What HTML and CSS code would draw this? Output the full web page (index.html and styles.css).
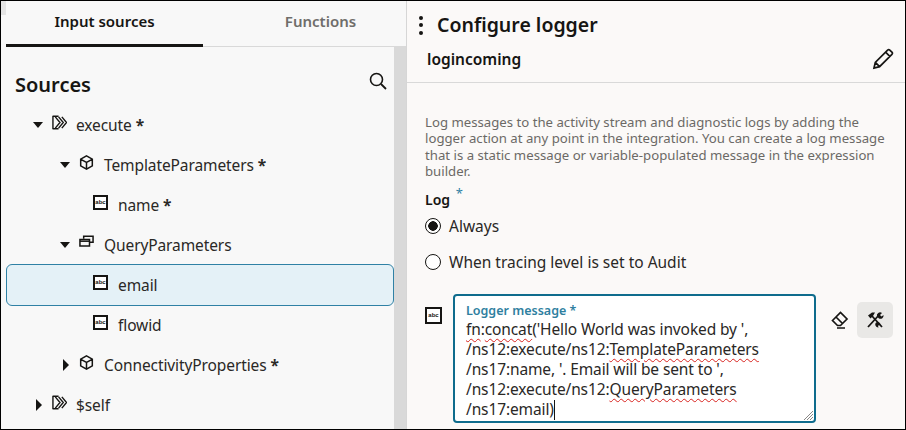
FILE: index.html
```html
<!DOCTYPE html>
<html lang="en">
<head>
<meta charset="utf-8">
<title>Configure logger</title>
<link rel="stylesheet" href="styles.css">
</head>
<body>
<svg class="sprite" width="0" height="0" aria-hidden="true">
  <symbol id="i-exec" viewBox="0 0 16 16">
    <path d="M1 1.3h6M1 14.7h6M1 .7v14.6" fill="none" stroke="#161513" stroke-width="1.5"/>
    <path d="M3.5 2l5 6-5 6M7 2l5 6-5 6M10.5 2l5 6-5 6" fill="none" stroke="#161513" stroke-width="1.5"/>
  </symbol>
  <symbol id="i-cube" viewBox="0 0 16 16">
    <path d="M8 1l6.2 3.5v7L8 15l-6.2-3.5v-7zM2 4.6L8 8l6-3.4M8 8v6.8" fill="none" stroke="#161513" stroke-width="1.6"/>
  </symbol>
  <symbol id="i-coll" viewBox="0 0 16 16">
    <path d="M5 4V1.2h10v6.6h-3.5" fill="none" stroke="#161513" stroke-width="1.6"/>
    <path d="M1 4.8h10.2v6.8H1z" fill="none" stroke="#161513" stroke-width="1.6"/>
    <path d="M1 6.6h10" stroke="#161513" stroke-width="1.6"/>
  </symbol>
</svg>
<div class="frame">
  <aside class="left">
    <nav class="tabs">
      <div class="tab active">Input sources</div>
      <div class="tab later">Functions</div>
    </nav>
    <div class="left-body">
      <div class="tree-pane">
        <div class="sources-head">
          <h2 class="sources-title">Sources</h2>
          <svg class="search" viewBox="0 0 18 18" width="18" height="18"><circle cx="7.5" cy="7.5" r="6" fill="none" stroke="#161513" stroke-width="1.6"/><path d="M12 12l5 5" stroke="#161513" stroke-width="1.8"/></svg>
        </div>
        <ul class="tree">
          <li class="row lv1"><span class="caret down"></span><svg class="ico"><use href="#i-exec"/></svg><span class="label">execute <b class="req">*</b></span></li>
          <li class="row lv2"><span class="caret down"></span><svg class="ico"><use href="#i-cube"/></svg><span class="label">TemplateParameters <b class="req">*</b></span></li>
          <li class="row lv3"><span class="ico abc">abc</span><span class="label">name <b class="req">*</b></span></li>
          <li class="row lv2"><span class="caret down"></span><svg class="ico"><use href="#i-coll"/></svg><span class="label">QueryParameters</span></li>
          <li class="row lv3 selected"><span class="ico abc">abc</span><span class="label">email</span></li>
          <li class="row lv3"><span class="ico abc">abc</span><span class="label">flowid</span></li>
          <li class="row lv2"><span class="caret right"></span><svg class="ico"><use href="#i-cube"/></svg><span class="label">ConnectivityProperties <b class="req">*</b></span></li>
          <li class="row lv1"><span class="caret right"></span><svg class="ico"><use href="#i-exec"/></svg><span class="label">$self</span></li>
        </ul>
      </div>
      <div class="scrollbar"></div>
    </div>
  </aside>
  <main class="right">
    <header class="head">
      <div class="head-top">
        <span class="kebab"><i></i><i></i><i></i></span>
        <h1 class="title">Configure logger</h1>
      </div>
      <div class="head-sub">
        <span class="name">logincoming</span>
        <svg class="pencil" viewBox="0 0 22 22" width="22" height="22"><path d="M2 20l1.3-5.6L15.6 2.1a1.6 1.6 0 0 1 2.2 0l2.1 2.1a1.6 1.6 0 0 1 0 2.2L7.6 18.7zM3.3 14.4l4.3 4.3M13.6 4.2l4.2 4.2" fill="none" stroke="#161513" stroke-width="1.7"/></svg>
      </div>
    </header>
    <section class="content">
      <p class="desc">Log messages to the activity stream and diagnostic logs by adding the logger action at any point in the integration. You can create a log message that is a static message or variable-populated message in the expression builder.</p>
      <div class="log-label">Log <span class="log-req">*</span></div>
      <div class="radio-row"><span class="radio on"></span><span>Always</span></div>
      <div class="radio-row"><span class="radio"></span><span>When tracing level is set to Audit</span></div>
      <div class="field">
        <span class="field-ico abc">abc</span>
        <div class="msgbox">
          <div class="msg-label">Logger message *</div>
          <div class="msg-text"><span class="sq">fn</span>:<span class="sq">concat</span>('Hello World was invoked by ',<br>/ns12:execute/ns12:<span class="sq">TemplateParameters</span><br>/ns17:name, '. Email will be sent to ',<br>/ns12:execute/ns12:<span class="sq">QueryParameters</span><br>/ns17:email)<span class="cursor"></span></div>
          <svg class="grip" viewBox="0 0 11 11" width="11" height="11"><path d="M1 10L10 1M4 10l6-6M7 10l3-3" stroke="#8a8886" stroke-width="1"/></svg>
        </div>
        <div class="tools">
          <svg class="erase" viewBox="0 0 18 18" width="18" height="18"><path d="M1.5 9.5L9.5 1.5l6.5 6.5-6.5 6.5H6.5zM5 6l6.5 6.5M6 17h8" fill="none" stroke="#161513" stroke-width="1.7"/></svg>
          <span class="tool-btn"><svg viewBox="0 0 18 18" width="18" height="18"><path d="M2 16L13 4M16 16L6 5" stroke="#161513" stroke-width="1.8" fill="none"/><path d="M2 4.5L6 1.5h3L7 5 4.5 7.5zM11 5.5a3.2 3.2 0 0 1 5-3.5l-2 2 1.5 1.5 2-1.5a3.2 3.2 0 0 1-4.5 3.5zM10 11.5a3 3 0 0 1 4.5 3l-1.5-.5-1 1 .5 1.5a3 3 0 0 1-2.5-5z" fill="#161513"/></svg></span>
        </div>
      </div>
    </section>
  </main>
</div>
</body>
</html>
```
FILE: styles.css
```css
* { box-sizing: border-box; }
html, body { margin: 0; padding: 0; }
body { width: 906px; height: 430px; overflow: hidden; font-family: "Noto Sans", sans-serif; color: #161513; }
.sprite { position: absolute; }
.frame { width: 906px; height: 430px; border: 1px solid #000; display: grid; grid-template-columns: 406px 1fr; background: #f8f8f8; overflow: hidden; }

.left { padding-left: 5px; display: flex; flex-direction: column; border-right: 1px solid #d6d6d6; min-height: 0; background: linear-gradient(#e4e4e4, #e4e4e4) no-repeat 0 0 / 5px 14px; }
.tabs { display: grid; grid-template-columns: 197px 1fr; height: 46px; border-bottom: 1px solid #d9d9d9; flex: none; }
.tab { font-size: 15px; font-weight: 600; color: #6f6d6a; text-align: center; line-height: 41px; }
.tab.later { padding-left: 32px; }
.tab.active { color: #161513; border-bottom: 3px solid #161513; height: 46px; }
.left-body { display: flex; flex: 1; min-height: 0; }
.tree-pane { flex: 1; min-width: 0; }
.scrollbar { width: 12px; background: #d9d9d9; flex: none; }
.sources-head { height: 58px; display: flex; justify-content: space-between; align-items: flex-start; padding: 24px 7px 0 9px; }
.sources-title { margin: 0; font-size: 20px; font-weight: 600; line-height: 28px; }
.search { margin-top: 1px; }
.tree { list-style: none; margin: 0; padding: 0; }
.row { height: 40px; display: flex; align-items: center; font-size: 15.5px; letter-spacing: -0.1px; color: #2a2826; }
.row.selected { height: 42px; margin: -1px 0; background: #e4f1f7; border: 1px solid #2f81a5; border-radius: 6px; }
.lv1 { padding-left: 27px; }
.lv2 { padding-left: 54px; }
.lv3 { padding-left: 87px; }
.selected.lv3 { padding-left: 86px; }
.ico { width: 15px; height: 15px; margin-bottom: 6px; margin-right: 9px; flex: none; }
.lv2 .ico { margin-right: 10px; }
.lv3 .ico { margin-right: 10px; }
.abc { display: flex; align-items: center; justify-content: center; background: #fff; border: 2px solid #161513; font-family: "Liberation Sans", sans-serif; font-weight: 700; font-size: 6px; letter-spacing: 0; color: #161513; line-height: 1; }
.req { font-weight: 700; }
.caret { width: 19px; flex: none; height: 10px; position: relative; margin-bottom: 1px; }
.caret::before { content: ""; position: absolute; width: 0; height: 0; border-style: solid; }
.caret.down::before { left: 0; top: 2px; border-width: 6px 5.5px 0; border-color: #161513 transparent transparent; }
.caret.right::before { left: 3px; top: -1px; border-width: 6px 0 6px 6px; border-color: transparent transparent transparent #161513; }

.right { background: #fbf9f8; min-width: 0; }
.head { height: 82px; border-bottom: 1px solid #d9d9d9; padding-left: 20px; padding-right: 11px; }
.head-top { display: flex; align-items: center; height: 46px; padding-top: 2px; }
.kebab { display: flex; flex-direction: column; gap: 3.5px; width: 4px; margin-left: -8px; margin-right: 14px; }
.kebab i { width: 4px; height: 4px; border-radius: 50%; background: #161513; display: block; }
.title { margin: 0; font-size: 19.5px; font-weight: 600; line-height: 28px; }
.head-sub { display: flex; justify-content: space-between; align-items: center; height: 24px; }
.name { font-size: 15.5px; font-weight: 600; }
.pencil { display: block; }
.content { padding: 31px 20px 0 18px; }
.desc { margin: 0; font-size: 13.2px; line-height: 16.4px; color: #6b6966; }
.log-label { font-size: 14px; font-weight: 600; margin-top: 11px; line-height: 17px; height: 17px; }
.log-req { color: #2f81a5; font-weight: 400; font-size: 13px; vertical-align: 7px; margin-left: 2px; line-height: 0; }
.radio-row { display: flex; align-items: center; gap: 8px; font-size: 15.5px; height: 36px; color: #2a2826; }
.radio { width: 16px; height: 16px; border: 1.5px solid #161513; border-radius: 50%; background: #fff; flex: none; }
.radio.on { background: radial-gradient(circle, #161513 0 4.5px, #fff 5px); }
.field { display: flex; align-items: flex-start; margin-top: 14px; margin-right: -7px; }
.field-ico { width: 17px; height: 17px; margin-top: 13px; margin-right: 11px; flex: none; }
.msgbox { position: relative; width: 363px; height: 129px; border: 2px solid #0f6c8d; border-radius: 4px; background: #fff; padding: 7px 11px 0 11px; flex: none; }
.msg-label { font-size: 12.5px; font-weight: 600; color: #2f7f9f; line-height: 16px; }
.msg-text { font-size: 15.5px; letter-spacing: -0.12px; line-height: 20px; color: #2a2826; white-space: nowrap; }
.sq { text-decoration: underline wavy #d8231f 1px; text-underline-offset: 3px; }
.cursor { display: inline-block; width: 1px; height: 20px; background: #161513; vertical-align: -5px; }
.grip { position: absolute; right: 0; bottom: 0; }
.tools { display: flex; align-items: center; margin-left: 15px; margin-top: 8px; gap: 8px; }
.erase { display: block; }
.tool-btn { width: 36px; height: 36px; background: #e9e8e6; border-radius: 5px; display: flex; align-items: center; justify-content: center; }
```
